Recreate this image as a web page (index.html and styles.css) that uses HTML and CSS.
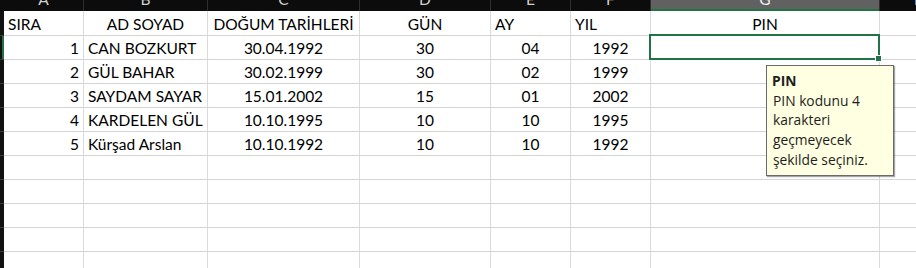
FILE: index.html
```html
<!DOCTYPE html>
<html>
<head>
<meta charset="utf-8">
<link rel="stylesheet" href="styles.css">
</head>
<body>
<div class="sheet">
  <div class="grid">
    <div class="corner"></div>
    <div class="ch"><span>A</span></div>
    <div class="ch"><span>B</span></div>
    <div class="ch"><span>C</span></div>
    <div class="ch"><span>D</span></div>
    <div class="ch"><span>E</span></div>
    <div class="ch"><span>F</span></div>
    <div class="ch ch-sel"><span>G</span></div>
    <div class="ch ch-last"><span>H</span></div>

    <div class="rh first"></div>
    <div class="c first l">SIRA</div>
    <div class="c first m">AD SOYAD</div>
    <div class="c first m">DOĞUM TARİHLERİ</div>
    <div class="c first m">GÜN</div>
    <div class="c first l">AY</div>
    <div class="c first l">YIL</div>
    <div class="c first m">PIN</div>
    <div class="c first"></div>

    <div class="rh rh-sel"></div>
    <div class="c r">1</div>
    <div class="c l">CAN BOZKURT</div>
    <div class="c m">30.04.1992</div>
    <div class="c m">30</div>
    <div class="c m">04</div>
    <div class="c m">1992</div>
    <div class="c sel"></div>
    <div class="c"></div>

    <div class="rh"></div>
    <div class="c r">2</div>
    <div class="c l">GÜL BAHAR</div>
    <div class="c m">30.02.1999</div>
    <div class="c m">30</div>
    <div class="c m">02</div>
    <div class="c m">1999</div>
    <div class="c"></div>
    <div class="c"></div>

    <div class="rh"></div>
    <div class="c r">3</div>
    <div class="c l">SAYDAM SAYAR</div>
    <div class="c m">15.01.2002</div>
    <div class="c m">15</div>
    <div class="c m">01</div>
    <div class="c m">2002</div>
    <div class="c"></div>
    <div class="c"></div>

    <div class="rh"></div>
    <div class="c r">4</div>
    <div class="c l">KARDELEN GÜL</div>
    <div class="c m">10.10.1995</div>
    <div class="c m">10</div>
    <div class="c m">10</div>
    <div class="c m">1995</div>
    <div class="c"></div>
    <div class="c"></div>

    <div class="rh"></div>
    <div class="c r">5</div>
    <div class="c l">Kürşad Arslan</div>
    <div class="c m">10.10.1992</div>
    <div class="c m">10</div>
    <div class="c m">10</div>
    <div class="c m">1992</div>
    <div class="c"></div>
    <div class="c"></div>

    <div class="rh"></div><div class="c"></div><div class="c"></div><div class="c"></div><div class="c"></div><div class="c"></div><div class="c"></div><div class="c"></div><div class="c"></div>
    <div class="rh"></div><div class="c"></div><div class="c"></div><div class="c"></div><div class="c"></div><div class="c"></div><div class="c"></div><div class="c"></div><div class="c"></div>
    <div class="rh"></div><div class="c"></div><div class="c"></div><div class="c"></div><div class="c"></div><div class="c"></div><div class="c"></div><div class="c"></div><div class="c"></div>
    <div class="rh"></div><div class="c"></div><div class="c"></div><div class="c"></div><div class="c"></div><div class="c"></div><div class="c"></div><div class="c"></div><div class="c"></div>
    <div class="rh"></div><div class="c"></div><div class="c"></div><div class="c"></div><div class="c"></div><div class="c"></div><div class="c"></div><div class="c"></div><div class="c"></div>
  </div>

  <div class="tip">
    <div class="tip-title">PIN</div>
    <div class="tip-line">PIN kodunu 4</div>
    <div class="tip-line">karakteri</div>
    <div class="tip-line">geçmeyecek</div>
    <div class="tip-line">şekilde seçiniz.</div>
  </div>
</div>
</body>
</html>
```

FILE: styles.css
```css
html, body {
  margin: 0;
  padding: 0;
  background: #ffffff;
  overflow: hidden;
}

.sheet {
  position: relative;
  width: 916px;
  height: 268px;
  overflow: hidden;
}

.grid {
  display: grid;
  width: 960px;
  grid-template-columns: 4px 80px 124px 152px 131px 80px 80px 229px 80px;
  grid-template-rows: 11px 25px repeat(10, 24px);
  font-family: Lato, "Liberation Sans", sans-serif;
  font-size: 15.5px;
  color: #000;
}

.corner {
  background: #0c0c0c;
}

.ch {
  background: #0c0c0c;
  color: #cfcfcf;
  border-right: 1px solid #2e2e2e;
  box-sizing: border-box;
  overflow: hidden;
  display: flex;
  align-items: flex-end;
  justify-content: center;
  padding-bottom: 4px;
}

.ch span {
  line-height: 15px;
  display: block;
}

.ch-sel {
  background: #616161;
  color: #f2f2f2;
  box-shadow: inset 0 -2px 0 #217346;
}

.ch-last {
  border-right: none;
}

.rh {
  background: #111111;
  border-bottom: 1px solid #3a3a3a;
  box-sizing: border-box;
}

.rh-sel {
  box-shadow: inset -2px 0 0 #217346;
}

.c {
  box-sizing: border-box;
  border-right: 1px solid #dadada;
  border-bottom: 1px solid #d4d4d4;
  display: flex;
  align-items: flex-end;
  padding: 0 4px 2px 4px;
  white-space: nowrap;
  line-height: 18px;
}

.l { justify-content: flex-start; }
.m { justify-content: center; padding-left: 0; padding-right: 0; }
.r { justify-content: flex-end; }

.sel {
  position: relative;
}

.sel::after {
  content: "";
  position: absolute;
  left: -2px;
  top: -2px;
  right: -1px;
  bottom: -1px;
  border: 2px solid #217346;
}

.sel::before {
  content: "";
  position: absolute;
  right: -2px;
  bottom: -2px;
  width: 5px;
  height: 5px;
  background: #217346;
  outline: 1px solid #ffffff;
  z-index: 2;
}

.tip {
  position: absolute;
  left: 766px;
  top: 65px;
  width: 128px;
  box-sizing: border-box;
  background: #ffffe1;
  border: 1px solid #6a6a6a;
  box-shadow: 1px 1px 1px rgba(0, 0, 0, 0.35);
  padding: 5px 4px 5px 5px;
  font-family: "Open Sans", "Noto Sans", sans-serif;
  font-size: 13.8px;
  line-height: 19.7px;
  color: #1e1e1e;
}

.tip-title {
  font-weight: bold;
}

.tip-line {
  padding-left: 1px;
  white-space: nowrap;
}
```
